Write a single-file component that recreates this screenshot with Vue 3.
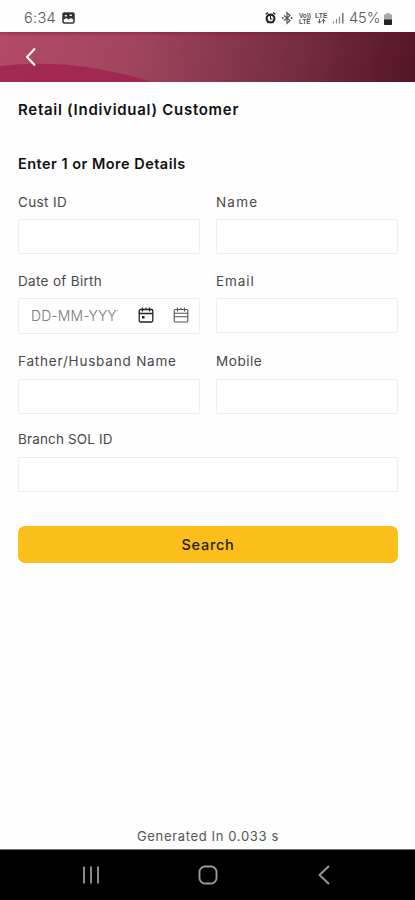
<script setup>
import { ref } from 'vue'

const form = ref({ cust: '', name: '', dob: '', email: '', father: '', mobile: '', branch: '' })
</script>

<template>
  <div class="screen">
    <div class="status">
      <span class="time">6:34</span>
      <svg class="photo" width="13" height="12" viewBox="0 0 13 12">
        <rect x="1" y="1" width="11" height="10" rx="1.2" fill="#fff" stroke="#333" stroke-width="1.500" />
        <path d="M1 1h11v7L9 6 6.500 7.500 4.500 6 1 8z" fill="#333" />
        <rect x="2.800" y="3" width="2" height="1.500" fill="#fff" /><rect x="7.500" y="2.500" width="2.500" height="1.500" fill="#ddd" />
      </svg>
      <svg class="signals" width="80" height="14" viewBox="0 0 80 14">
        <g fill="none" stroke="#222">
          <circle cx="5.500" cy="7.500" r="3.900" stroke-width="2.100" />
          <path d="M.7 3.300 3 1.500M8 1.500l2.300 1.800M2.500 12.200l1-1.500M8.500 12.200l-1-1.500" stroke-width="1.300" />
          <path d="M5.500 5v3h2" stroke-width="1.100" />
        </g>
        <path d="m19 4.500 6 5-3 2.800V1.700l3 2.800-6 5" fill="none" stroke="#555" stroke-width="1.200" />
        <circle cx="17.800" cy="7" r="1" fill="#555" /><circle cx="26.500" cy="7" r="1" fill="#555" />
        <g class="mini">
          <text x="34" y="6.500" textLength="12" lengthAdjust="spacingAndGlyphs">Vo))</text><text x="34" y="12.800" textLength="11.500" lengthAdjust="spacingAndGlyphs">LTE</text>
          <text x="50" y="6.500" textLength="12.500" lengthAdjust="spacingAndGlyphs">LTE</text>
        </g>
        <path d="M54.500 7.800v4M52.800 10.200l1.700 2 1.700-2M58.500 12.500v-4M56.800 10.200l1.700-2 1.700 2" fill="none" stroke="#555" />
        <path d="M68.500 12.500v-2M71.500 12.500v-4.500M74.500 12.500V5.500" stroke="#888" stroke-width="1.200" /><path d="M77.800 12.500V2" stroke="#555" stroke-width="1.200" />
      </svg>
      <span class="percent">45%</span>
      <svg class="battery" width="8" height="12" viewBox="0 0 8 12">
        <path d="M2.500 0h3v1.200H7Q8 1.200 8 2.200V11q0 1-1 1H1q-1 0-1-1V2.200q0-1 1-1h1.500z" fill="#aaa" />
        <path d="M0 6.500h8V11q0 1-1 1H1q-1 0-1-1z" fill="#222" />
      </svg>
    </div>

    <header class="bar">
      <svg class="wave" viewBox="0 0 415 50" preserveAspectRatio="none">
        <path d="M0 34Q45 29 87 35 123 41 153 50H0z" fill="#a0234e" opacity=".85" />
      </svg>
      <svg class="back" width="12" height="20" viewBox="0 0 12 20">
        <path d="M10 1.500 2 10l8 8.500" fill="none" stroke="#fff" stroke-width="2" stroke-linejoin="round" />
      </svg>
    </header>

    <main class="content">
      <h1 class="title">Retail (Individual) Customer</h1>
      <h2 class="subtitle">Enter 1 or More Details</h2>
      <form class="grid" @submit.prevent>
        <label class="field"><span class="label cust">Cust ID</span><input v-model="form.cust" class="box"></label>
        <label class="field"><span class="label name">Name</span><input v-model="form.name" class="box"></label>
        <label class="field">
          <span class="label dob">Date of Birth</span>
          <span class="box date">
            <input v-model="form.dob" class="date-input" placeholder="DD-MM-YYYY">
            <svg class="cal first" width="16" height="16" viewBox="0 0 16 16" fill="none" stroke="#222" stroke-width="1.300">
              <rect x="1.200" y="2.500" width="13.600" height="12.500" rx="1.500" /><path d="M1 6.500h14M4.500.5v4M8 .8v2M11.500.5v4" /><rect x="4" y="9" width="2.500" height="2.500" fill="#222" stroke="none" />
            </svg>
            <svg class="cal" width="16" height="16" viewBox="0 0 16 16" fill="none" stroke="#555" stroke-width="1.100">
              <rect x="1.200" y="2.500" width="13.600" height="12.500" rx="1" /><path d="M1 6.200h14M1 9.800h14M4.500.5v4M11.500.5v4M8 .8v2" />
            </svg>
          </span>
        </label>
        <label class="field"><span class="label email">Email</span><input v-model="form.email" class="box"></label>
        <label class="field"><span class="label father">Father/Husband Name</span><input v-model="form.father" class="box"></label>
        <label class="field"><span class="label mobile">Mobile</span><input v-model="form.mobile" class="box"></label>
        <label class="field wide"><span class="label branch">Branch SOL ID</span><input v-model="form.branch" class="box"></label>
        <button class="search">Search</button>
      </form>
      <p class="generated">Generated In 0.033 s</p>
    </main>

    <nav class="nav">
      <svg width="18" height="18" viewBox="0 0 18 18" stroke="#999" stroke-width="1.800"><path d="M2 .5v17M9 .5v17M16 .5v17" /></svg>
      <svg width="20" height="20" viewBox="0 0 20 20"><rect x="1.500" y="1.500" width="17" height="17" rx="5.500" fill="none" stroke="#999" stroke-width="1.900" /></svg>
      <svg width="18" height="20" viewBox="0 0 18 20"><path d="M14 1 4.500 10l9.500 9" fill="none" stroke="#999" stroke-width="1.900" /></svg>
    </nav>
  </div>
</template>

<style>
body { margin: 0; background: #fefefe; }
</style>

<style scoped>
.screen { width: 415px; height: 900px; display: flex; flex-direction: column; font-family: Inter, "Noto Sans", sans-serif; background: #fefefe; overflow: hidden; }
.screen * { box-sizing: border-box; }
.status { height: 32px; flex: none; display: flex; align-items: center; padding: 3px 23px 0 24px; color: #555; }
.time { font: 300 14.500px/18px Inter, sans-serif; width: 38px; letter-spacing: .3px; }
.photo { margin-top: 1px; }
.signals { margin-left: auto; }
.mini { font: 600 6.500px "Liberation Sans", sans-serif; fill: #555; }
.percent { font: 300 14.500px/18px Inter, sans-serif; margin-left: 4px; width: 35px; letter-spacing: 0; white-space: nowrap; }
.battery { margin-top: 2px; }
.bar { height: 50px; flex: none; display: flex; align-items: center; padding-left: 25px; position: relative; background: linear-gradient(to bottom, rgba(130, 0, 55, .35), transparent 4px), linear-gradient(101deg, #b34a66 0%, #a1455e 32%, #8a384f 52%, #702a3e 75%, #531525 100%); }
.wave { position: absolute; inset: 0; width: 100%; height: 100%; }
.back { position: relative; }
.content { flex: 1; display: flex; flex-direction: column; padding: 18px 17px 0 18px; }
.title, .subtitle { margin: 0; font-weight: 600; line-height: 20px; color: #111; white-space: nowrap; }
.title { font-size: 15px; letter-spacing: .72px; }
.subtitle { font-size: 14.500px; margin-top: 34px; letter-spacing: .48px; }
.grid { display: grid; grid-template-columns: 182px 182px; justify-content: space-between; margin-top: 17px; }
.field { display: flex; flex-direction: column; height: 80px; }
.field:nth-child(-n+2) { height: 79px; }
.field:nth-child(n+5) { height: 78px; }
.field:nth-child(n+5) .label { height: 29px; }
.label { font-size: 13.500px; line-height: 22px; height: 28px; flex: none; color: #484848; white-space: nowrap; }
.cust { letter-spacing: .35px; }
.name { letter-spacing: 1.200px; }
.dob { letter-spacing: .32px; }
.email { letter-spacing: .9px; }
.father { letter-spacing: .8px; }
.mobile { letter-spacing: .55px; }
.branch { letter-spacing: .15px; }
.box { display: flex; width: 100%; height: 34.500px; border: 1.500px solid #eee; border-radius: 2px; background: #fff; padding: 0 12px; outline: none; font: inherit; }
.date { height: 36px; align-items: center; padding: 0 10px 2px 12px; }
.date-input { width: 87px; padding: 0; border: 0; outline: 0; background: transparent; font: 300 14px Inter, sans-serif; letter-spacing: .1px; }
.date-input::placeholder { color: #777; opacity: 1; }
.cal { flex: none; margin-left: 19px; }
.cal.first { margin-left: 20px; }
.wide, .search { grid-column: 1 / -1; }
.search { height: 37px; margin-top: 20px; border: 0; border-radius: 7px; background: #fcbe1b; color: #262000; font: 500 14.500px Inter, sans-serif; letter-spacing: .7px; }
.generated { margin: auto 0 3px; text-align: center; font-size: 13px; line-height: 20px; color: #555; letter-spacing: .65px; }
.nav { height: 51px; flex: none; background: #000; border-top: 1px solid #777; display: flex; justify-content: space-between; align-items: center; padding: 0 82px 1px; }
</style>
